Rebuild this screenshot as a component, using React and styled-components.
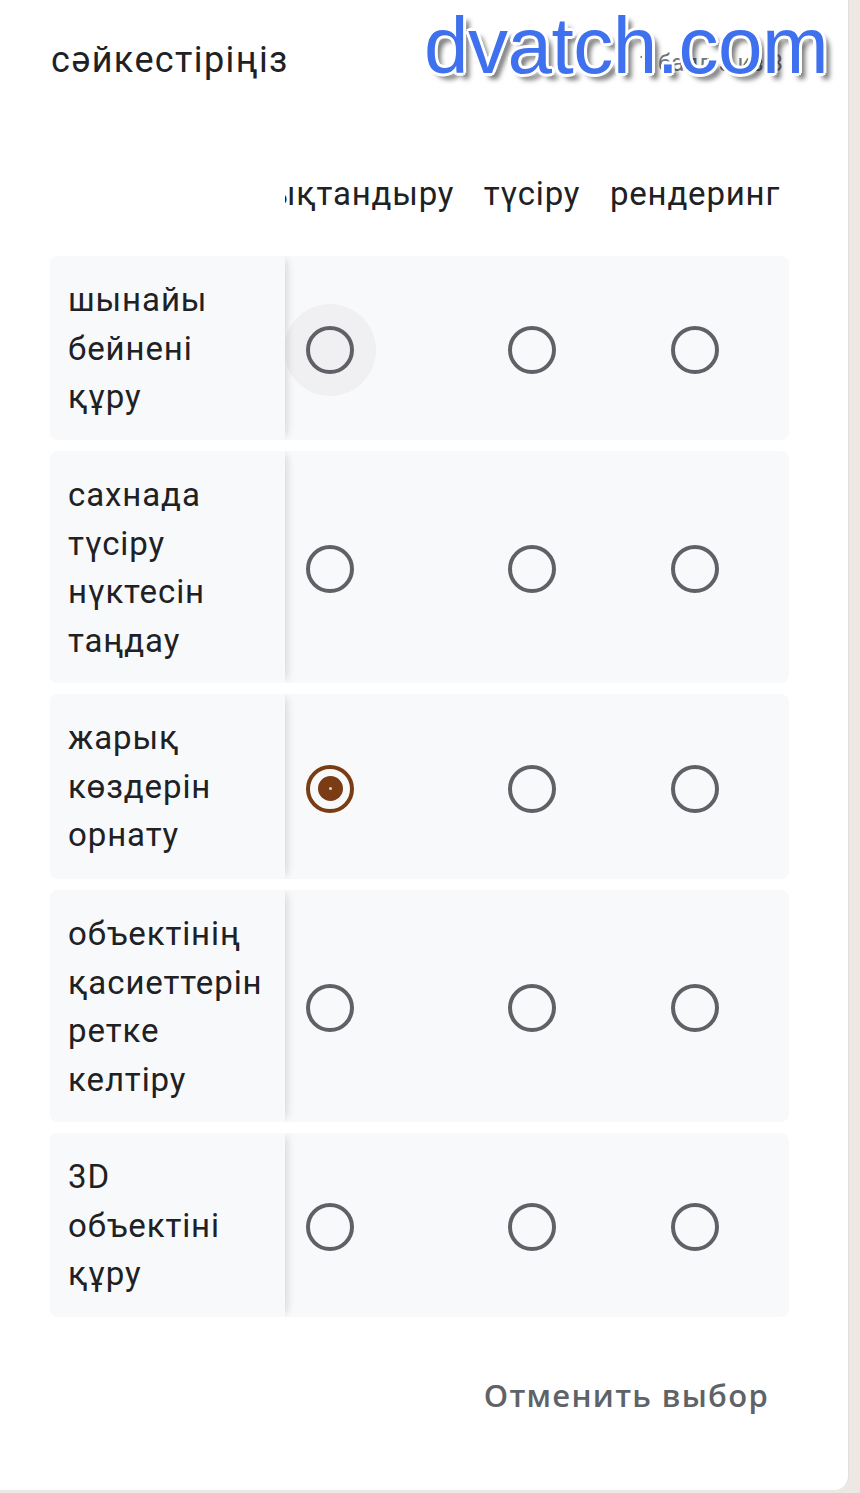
import React from "react";
import styled, { createGlobalStyle } from "styled-components";

const Global = createGlobalStyle`
  html, body { margin: 0; padding: 0; background: #ffffff; }
  body { font-family: Roboto, "Noto Sans", Arial, sans-serif; }
  #root { width: 860px; }
`;

const Page = styled.div`
  display: flex;
  width: 860px;
  min-height: 1493px;
  background: #ece9e5;
`;

const Card = styled.div`
  position: relative;
  width: 849px;
  box-sizing: border-box;
  background: #ffffff;
  padding: 36px 59px 0 50px;
  height: 1490px;
  border-bottom-right-radius: 14px;
  border-right: 1px solid #e2dfda;
`;

const TitleRow = styled.div`
  display: flex;
  align-items: center;
  justify-content: space-between;
  height: 48px;
`;

const Title = styled.div`
  font-size: 36px;
  line-height: 48px;
  color: #202124;
  padding-left: 1px;
  letter-spacing: 1.4px;
`;

const Score = styled.div`
  font-size: 24px;
  color: #70757a;
  margin-right: 6px;
  margin-top: 6px;
`;

const Watermark = styled.div`
  position: absolute;
  left: 424px;
  top: -4px;
  font-family: "Liberation Sans", Arial, sans-serif;
  font-size: 80px;
  line-height: 100px;
  color: #3f70ee;
  letter-spacing: -0.5px;
  text-shadow:
    -2px -2px 0 #fff, 2px -2px 0 #fff, -2px 2px 0 #fff, 2px 2px 0 #fff,
    0 -3px 0 #fff, 0 3px 0 #fff, -3px 0 0 #fff, 3px 0 0 #fff,
    6px 6px 5px rgba(0, 0, 0, 0.55);
  pointer-events: none;
`;

const Grid = styled.div`
  display: flex;
  flex-direction: column;
  margin-top: 77px;
`;

const Row = styled.div`
  display: flex;
  align-items: stretch;
  border-radius: 8px;
  overflow: hidden;
  background: ${(p) => (p.$header ? "#ffffff" : "#f8f9fa")};
  height: ${(p) => p.$h}px;
  margin-bottom: ${(p) => p.$mb ?? 11}px;
`;

const LabelCell = styled.div`
  position: relative;
  z-index: 1;
  flex: 0 0 235px;
  box-sizing: border-box;
  padding: 20px 4px 20px 18px;
  font-size: 33px;
  line-height: 48.5px;
  color: #202124;
  letter-spacing: 0.9px;
  white-space: nowrap;
  background: ${(p) => (p.$header ? "#ffffff" : "#f8f9fa")};
  box-shadow: ${(p) => (p.$header ? "none" : "6px 0 8px -4px rgba(0,0,0,0.14)")};
`;

const Cells = styled.div`
  flex: 1;
  display: grid;
  grid-template-columns: 260px 144px 182px;
  margin-left: -85px;
  align-items: center;
`;

const HeadCell = styled.div`
  text-align: center;
  font-size: 33px;
  color: #202124;
  white-space: nowrap;
  letter-spacing: 0.8px;
`;

const RadioCell = styled.div`
  display: flex;
  justify-content: center;
  align-items: center;
  padding-top: 4px;
`;

const Halo = styled.div`
  width: 92px;
  height: 92px;
  border-radius: 50%;
  display: flex;
  align-items: center;
  justify-content: center;
  background: ${(p) => (p.$hover ? "#f0f0f2" : "transparent")};
`;

const Radio = styled.div`
  width: 40px;
  height: 40px;
  border-radius: 50%;
  border: 4px solid ${(p) => (p.$checked ? "#7a3c14" : "#5f6166")};
  display: flex;
  align-items: center;
  justify-content: center;
`;

const Dot = styled.div`
  width: 25px;
  height: 25px;
  border-radius: 50%;
  background: #7a3c14;
  display: flex;
  align-items: center;
  justify-content: center;
  &::after {
    content: "";
    width: 3px;
    height: 3px;
    border-radius: 50%;
    background: #e8d6c8;
  }
`;

const Footer = styled.div`
  display: flex;
  justify-content: flex-end;
  margin-top: 39px;
`;

const ClearButton = styled.button`
  border: none;
  background: transparent;
  font-family: "Open Sans", Lato, sans-serif;
  font-weight: 600;
  font-size: 31px;
  letter-spacing: 1.3px;
  color: #5f6368;
  height: 56px;
  padding: 0 20px 0 0;
  cursor: pointer;
`;

const columns = ["жарықтандыру", "түсіру", "рендеринг"];

const rows = [
  { label: ["шынайы", "бейнені", "құру"], h: 184, hover: 0 },
  { label: ["сахнада", "түсіру", "нүктесін", "таңдау"], h: 232 },
  { label: ["жарық", "көздерін", "орнату"], h: 185, checked: 0 },
  { label: ["объектінің", "қасиеттерін", "ретке", "келтіру"], h: 232 },
  { label: ["3D", "объектіні", "құру"], h: 184 },
];

export default function App() {
  return (
    <>
      <Global />
      <Page>
        <Card>
          <TitleRow>
            <Title>сәйкестіріңіз</Title>
            <Score>1 балл 5 из 3</Score>
          </TitleRow>
          <Watermark>dvatch.com</Watermark>
          <Grid>
            <Row $header $h={64} $mb={31}>
              <LabelCell $header />
              <Cells>
                {columns.map((c) => (
                  <HeadCell key={c}>{c}</HeadCell>
                ))}
              </Cells>
            </Row>
            {rows.map((r, i) => (
              <Row key={i} $h={r.h}>
                <LabelCell>
                  {r.label.map((l, j) => (
                    <div key={j}>{l}</div>
                  ))}
                </LabelCell>
                <Cells>
                  {columns.map((c, k) => (
                    <RadioCell key={c}>
                      <Halo $hover={r.hover === k}>
                        <Radio $checked={r.checked === k}>
                          {r.checked === k && <Dot />}
                        </Radio>
                      </Halo>
                    </RadioCell>
                  ))}
                </Cells>
              </Row>
            ))}
          </Grid>
          <Footer>
            <ClearButton>Отменить выбор</ClearButton>
          </Footer>
        </Card>
      </Page>
    </>
  );
}
